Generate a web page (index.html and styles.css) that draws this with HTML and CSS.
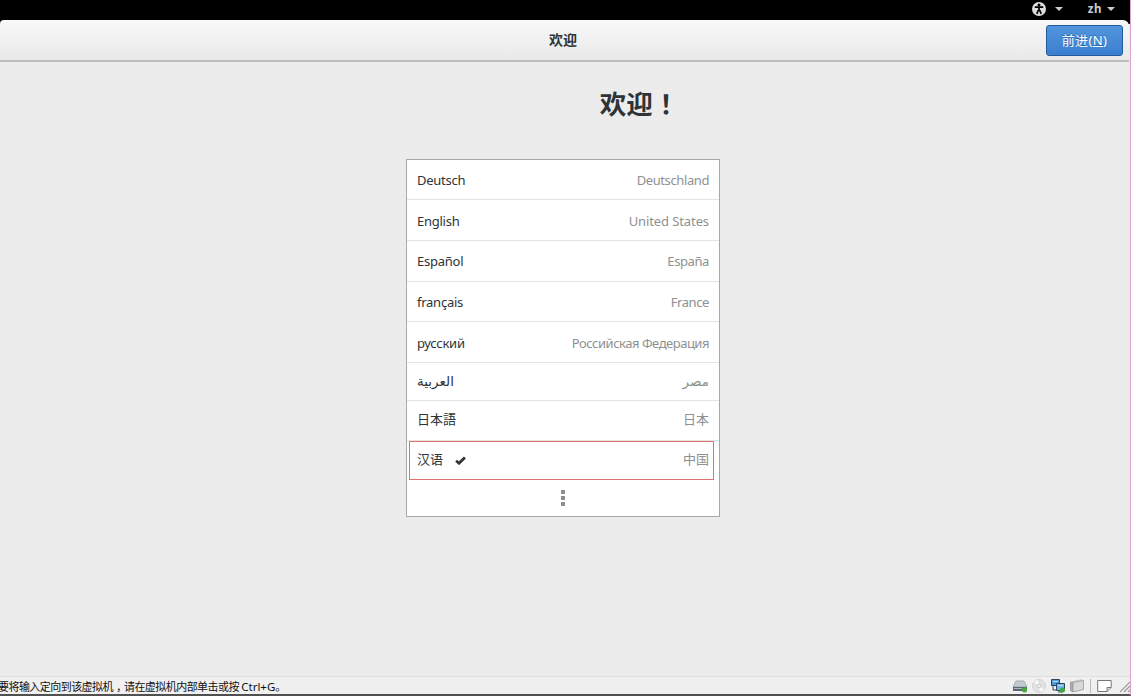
FILE: index.html
```html
<!DOCTYPE html>
<html lang="zh-CN">
<head>
    <meta charset="UTF-8">
    <title>欢迎</title>
    <link rel="stylesheet" href="styles.css">
</head>
<body>
<div class="screen">
    <div class="topbar">
        <svg class="access" viewBox="0 0 14 14">
            <circle cx="7" cy="7" r="7" fill="#ddd"/>
            <circle cx="7" cy="3" r="1.5" fill="#000"/>
            <path d="M2.8 5.2h8.4M7 5v4M6.4 8 4.8 11.8M7.6 8l1.6 3.8" stroke="#000" stroke-width="1.7" fill="none"/>
        </svg>
        <span class="arrow"></span>
        <span class="lang">zh</span>
        <span class="arrow"></span>
    </div>
    <div class="header">
        <div class="title">欢迎</div>
        <button class="next">前进(<u>N</u>)</button>
    </div>
    <div class="content">
        <h1>欢迎<span class="mark" lang="zh-TW">！</span></h1>
        <div class="list">
            <div class="row first"><span>Deutsch</span><span class="country">Deutschland</span></div>
            <div class="row low"><span>English</span><span class="country us">United States</span></div>
            <div class="row"><span>Español</span><span class="country">España</span></div>
            <div class="row fr"><span>français</span><span class="country">France</span></div>
            <div class="row low"><span>русский</span><span class="country ru">Российская Федерация</span></div>
            <div class="row ar"><span>العربية</span><span class="country">مصر</span></div>
            <div class="row cjk" lang="ja"><span>日本語</span><span class="country">日本</span></div>
            <div class="row cjk zh">
                <span>汉语</span>
                <svg class="check" viewBox="0 0 10 8"><path d="M1 4.2 3.7 6.5 9 1.3" stroke="#2e3436" stroke-width="2.5" fill="none"/></svg>
                <span class="country">中国</span>
            </div>
            <div class="more"><i></i><i></i><i></i></div>
        </div>
    </div>
    <div class="status">
        <div class="tip">要将输入定向到该虚拟机<span class="comma">，</span>请在虚拟机内部单击或按 <span class="key">Ctrl+G</span>。</div>
        <div class="devices">
            <svg width="16" height="14" viewBox="0 0 16 14">
                <path d="M4 2h8l3 6H1z" fill="#c3cad2" stroke="#8c959e" stroke-width=".7"/>
                <path d="M1 8h14v4H1z" fill="#596777"/>
                <path d="M2 9.5h8" stroke="#a8b6c3"/>
                <circle cx="12.5" cy="11" r="2.5" fill="#43a83c"/>
            </svg>
            <svg width="16" height="14" viewBox="0 0 16 14">
                <circle cx="8" cy="7" r="6.4" fill="#e2e2e2" stroke="#d0d0d0"/>
                <path d="M8 7 3 3.5A6 6 0 0 1 7 1zM8 7l5 3.5A6 6 0 0 1 9 13z" fill="#f8f8f8"/>
                <circle cx="8" cy="7" r="1.8" fill="#f1f1f1" stroke="#bbb" stroke-width=".7"/>
            </svg>
            <svg width="16" height="14" viewBox="0 0 16 14">
                <path d="M1.5.5h8v6h-8z" fill="#4f9bd9" stroke="#28455f"/>
                <path d="M3 7v4h3" stroke="#28455f" fill="none"/>
                <path d="M6.5 4.5h8v7h-8z" fill="#6fb6ec" stroke="#28455f"/>
                <path d="M3 2.5h5M8 6.5h5" stroke="#b5dcf7"/>
                <path d="M8 13h5" stroke="#28455f"/>
                <circle cx="12.5" cy="11" r="2.5" fill="#43a83c"/>
            </svg>
            <svg width="16" height="14" viewBox="0 0 16 14">
                <path d="M1.5 3 4 3.5V13l-2.5-1.5z" fill="#aaa" stroke="#999" stroke-width=".8"/>
                <path d="M1.5 3 12 .8l2.5.7L4 3.5z" fill="#eee" stroke="#aaa" stroke-width=".6"/>
                <path d="M4 3.5 14.5 1.5v9L4 13z" fill="#d8d8d8" stroke="#999" stroke-width=".8"/>
            </svg>
            <span class="line"></span>
            <svg width="15" height="14" viewBox="0 0 15 14">
                <path d="M.7 1.5h13.5v7l-4 4H.7z" fill="#fff" stroke="#777"/>
                <path d="M14 8.5h-4v4" fill="#ddd" stroke="#777"/>
            </svg>
            <svg class="grip" width="10" height="14" viewBox="0 0 10 14">
                <path d="M0 13 10 3M4 13l6-6M8 13l2-2" stroke="#999" stroke-width="1.2"/>
            </svg>
        </div>
    </div>
</div>
</body>
</html>
```
FILE: styles.css
```css
body{
    margin: 0;
    background-color: #ececec;
    font-family: "Noto Sans","Noto Sans CJK SC",sans-serif;
    color: #2e3436;
    overflow: hidden;
}
.screen{
    height: 696px;
    box-sizing: border-box;
    display: flex;
    flex-direction: column;
    border-right: 1px solid #d9a3d0;
    border-bottom: 2px solid #505050;
    background: linear-gradient(#000 24px,#ececec 24px);
}
.topbar{
    height: 20px;
    display: flex;
    align-items: center;
    justify-content: flex-end;
    padding: 0 15px 3px 0;
    box-sizing: border-box;
    background-color: #000;
    color: #ccc;
    font-size: 11.5px;
    font-weight: bold;
}
.access{
    width: 14px;
    height: 14px;
}
.arrow{
    border: 4px solid transparent;
    border-top-color: #ccc;
    border-bottom: 0;
    margin-left: 9px;
}
.lang{
    margin-left: 25px;
    letter-spacing: .5px;
}
.lang + .arrow{
    margin-left: 5px;
}
.header{
    height: 42px;
    box-sizing: border-box;
    display: grid;
    grid-template-columns: 1fr auto 1fr;
    align-items: center;
    padding: 0 6px 0 2px;
    margin-right: 1px;
    border-bottom: 2px solid #bdbdbd;
    border-radius: 4px 6px 0 0;
    background: linear-gradient(#f8f8f8,#e9e9e9);
}
.title{
    grid-column: 2;
    margin-right: -1px;
    padding-bottom: 2px;
    font-size: 14px;
    font-weight: bold;
}
.next{
    justify-self: end;
    width: 77px;
    height: 31px;
    padding: 0 0 1px;
    border: 1px solid #215b9c;
    border-radius: 3px;
    background: linear-gradient(#5295dd,#3a7fd0);
    color: #fff;
    font-family: inherit;
    font-size: 13px;
    letter-spacing: .4px;
    text-shadow: 0 -1px #2a68ad;
}
.content{
    flex: 1;
    display: flex;
    flex-direction: column;
    align-items: center;
    background-color: #ececec;
}
.mark{
    font-family: "Noto Sans CJK TC",sans-serif;
}
h1{
    margin: 21px 0 0 149px;
    height: 76px;
    line-height: 40px;
    font-size: 26.5px;
}
.list{
    width: 314px;
    height: 358px;
    box-sizing: border-box;
    margin-right: 4px;
    border: 1px solid #a8a8a8;
    background-color: #fff;
    font-size: 13px;
    letter-spacing: -.25px;
}
.row{
    height: 41px;
    box-sizing: border-box;
    display: flex;
    align-items: center;
    padding: 0 10px;
    border-bottom: 1px solid #e3e3e3;
}
.row.first,.row.fr{
    height: 40px;
}
.row.low{
    padding-top: 1px;
}
.row.ar{
    height: 38px;
    padding-bottom: 2px;
    font-family: "DejaVu Sans",sans-serif;
    font-size: 13.5px;
    letter-spacing: 0;
}
.row.cjk{
    height: 40px;
    padding-bottom: 4px;
    letter-spacing: 0;
}
.row.zh{
    height: 39px;
    margin: 0 5px 0 2px;
    padding: 0 4px 4px 7px;
    border: 1px solid #df7373;
}
.country{
    margin-left: auto;
    color: #8e9192;
    letter-spacing: -.4px;
}
.us{
    letter-spacing: -.1px;
}
.ru{
    letter-spacing: -.48px;
}
.ar .country,.cjk .country{
    letter-spacing: 0;
}
.check{
    width: 11px;
    height: 9px;
    margin: 4px 0 0 12px;
}
.more{
    height: 35px;
    display: flex;
    flex-direction: column;
    align-items: center;
    justify-content: center;
    gap: 2px;
}
.more i{
    width: 4px;
    height: 4px;
    background-color: #8e8e8e;
}
.status{
    height: 18px;
    box-sizing: border-box;
    display: flex;
    align-items: center;
    justify-content: space-between;
    border-top: 1px solid #dedede;
    background-color: #f0f0f0;
    color: #111;
    font-size: 11px;
}
.tip{
    margin-left: -2px;
    white-space: nowrap;
    letter-spacing: -.55px;
}
.comma{
    margin-left: 3px;
    letter-spacing: -3px;
}
.key{
    font-size: 11.5px;
    letter-spacing: 0;
}
.devices{
    display: flex;
    align-items: center;
    gap: 3px;
}
.line{
    width: 1px;
    height: 14px;
    margin: 0 3px 0 2px;
    background-color: #bbb;
}
.grip{
    margin-left: 5px;
}
```
